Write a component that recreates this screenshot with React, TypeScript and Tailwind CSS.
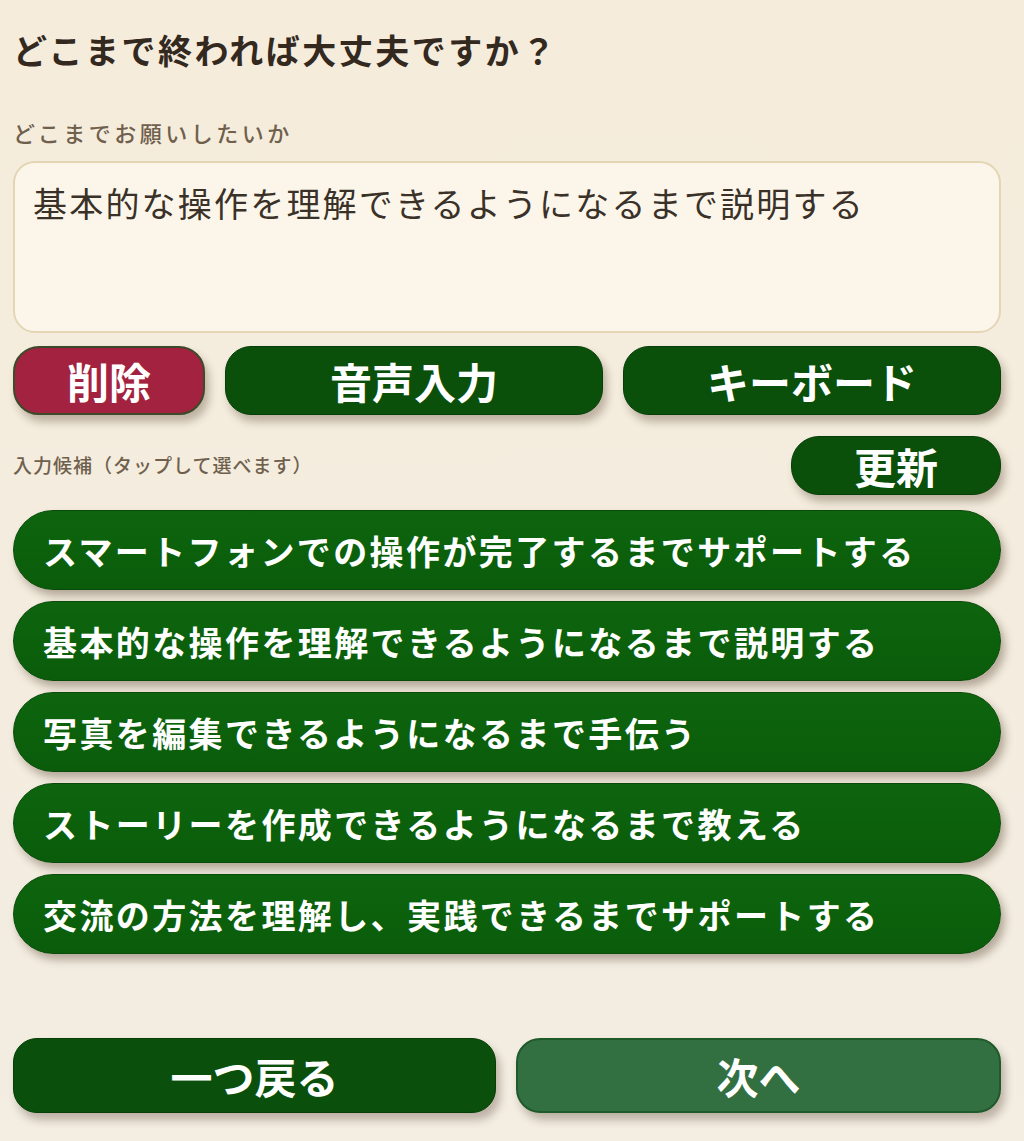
import React from "react";

const FONT = { fontFamily: '"Noto Sans CJK JP", "Noto Sans", sans-serif' };

const suggestions = [
  "スマートフォンでの操作が完了するまでサポートする",
  "基本的な操作を理解できるようになるまで説明する",
  "写真を編集できるようになるまで手伝う",
  "ストーリーを作成できるようになるまで教える",
  "交流の方法を理解し、実践できるまでサポートする",
];

export default function App() {
  return (
    <div
      style={FONT}
      className="w-[1024px] h-[1141px] overflow-hidden bg-gradient-to-b from-[#f5ecdb] to-[#f3ede2] pl-[13px] pr-[23px] pt-[27px] flex flex-col"
    >
      <h1 className="text-[34px] leading-[46px] font-bold text-[#33291f] tracking-[2.5px]">
        どこまで終われば大丈夫ですか？
      </h1>
      <div className="mt-[44px] text-[22px] leading-[30px] font-medium text-[#6f604d] tracking-[3.5px]">
        どこまでお願いしたいか
      </div>
      <div className="mt-[14px] h-[172px] rounded-[22px] border-2 border-[#e4d5b5] bg-[#fcf6ea] pl-[18px] pt-[18px]">
        <div className="text-[34px] leading-[44px] text-[#3a3128] tracking-[2.2px]">
          基本的な操作を理解できるようになるまで説明する
        </div>
      </div>
      <div className="mt-[13px] flex gap-[20px]">
        <button className="w-[192px] h-[69px] rounded-[26px] bg-[#a32240] border-2 border-[#3c4a2a] text-white text-[42px] font-bold shadow-[4px_7px_9px_rgba(60,40,20,0.3)] flex items-center justify-center">
          削除
        </button>
        <button className="flex-1 h-[69px] rounded-[26px] bg-[#0a500b] border border-[#083f08] text-white text-[42px] font-bold shadow-[4px_7px_9px_rgba(60,40,20,0.3)] flex items-center justify-center">
          音声入力
        </button>
        <button className="flex-1 h-[69px] rounded-[26px] bg-[#0a500b] border border-[#083f08] text-white text-[42px] font-bold shadow-[4px_7px_9px_rgba(60,40,20,0.3)] flex items-center justify-center">
          キーボード
        </button>
      </div>
      <div className="mt-[21px] flex items-center justify-between">
        <div className="text-[19px] font-medium text-[#6f604d] tracking-[1px]">
          入力候補（タップして選べます）
        </div>
        <button className="w-[210px] h-[59px] rounded-[28px] bg-[#0a500b] border border-[#083f08] text-white text-[42px] font-bold shadow-[4px_7px_9px_rgba(60,40,20,0.3)] flex items-center justify-center">
          更新
        </button>
      </div>
      <div className="mt-[15px] flex flex-col gap-[11px]">
        {suggestions.map((s) => (
          <button
            key={s}
            className="h-[80px] rounded-[40px] bg-gradient-to-b from-[#0e650e] to-[#0a5c0a] border border-[#0a4a0a] text-white text-[34px] font-bold tracking-[2.4px] shadow-[4px_6px_8px_rgba(60,40,20,0.35)] flex items-center pl-[29px] text-left"
          >
            {s}
          </button>
        ))}
      </div>
      <div className="mt-[84px] flex gap-[20px]">
        <button className="flex-1 h-[75px] rounded-[24px] bg-[#0a4f0b] border border-[#083f08] text-white text-[42px] font-bold shadow-[4px_7px_9px_rgba(60,40,20,0.3)] flex items-center justify-center">
          一つ戻る
        </button>
        <button className="flex-1 h-[75px] rounded-[24px] bg-[#337041] border-2 border-[#1f5a2a] text-white text-[42px] font-bold shadow-[4px_7px_9px_rgba(60,40,20,0.3)] flex items-center justify-center">
          次へ
        </button>
      </div>
    </div>
  );
}
